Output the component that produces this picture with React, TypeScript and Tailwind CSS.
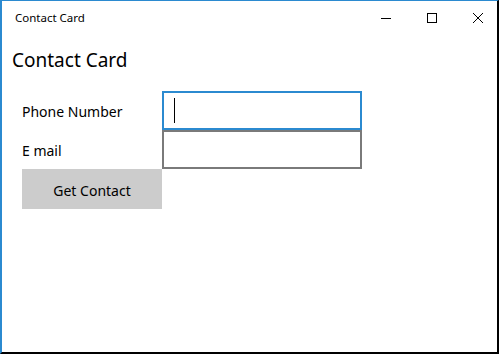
export default function App() {
  const font = { fontFamily: '"Noto Sans", "Open Sans", sans-serif' };
  return (
    <div
      className="w-[499px] h-[354px] overflow-hidden bg-white border-t border-l-2 border-t-[#2b8ad0] border-l-[#2b8ad0] border-r-2 border-b-2 border-r-black border-b-black flex flex-col text-black"
      style={font}
    >
      <div className="h-[31px] pt-[3px] flex items-center">
        <div className="pl-[13px] text-[11.5px] leading-none">Contact Card</div>
        <div className="ml-auto -mr-[4px] flex h-full">
          <div className="w-[46px] h-full flex items-center justify-center">
            <svg width="10" height="10" viewBox="0 0 10 10">
              <path d="M0 5.5H10" stroke="black" strokeWidth="1" />
            </svg>
          </div>
          <div className="w-[46px] h-full flex items-center justify-center">
            <svg width="10" height="10" viewBox="0 0 10 10">
              <rect x="0.5" y="0.5" width="9" height="9" fill="none" stroke="black" strokeWidth="1" />
            </svg>
          </div>
          <div className="w-[46px] h-full flex items-center justify-center">
            <svg width="10" height="10" viewBox="0 0 10 10">
              <path d="M0 0L10 10M10 0L0 10" stroke="black" strokeWidth="1" />
            </svg>
          </div>
        </div>
      </div>
      <div className="mt-[14px] pl-[10px] text-[19px] leading-[28px]">Contact Card</div>
      <div className="mt-[17px] ml-[20px] grid grid-cols-[140px_200px] grid-rows-[39px_39px_40px]">
        <div className="flex items-center pt-[2px] text-[14px]">Phone Number</div>
        <div className="border-2 border-[#2b8ad0] flex items-center pl-[10px]">
          <div className="w-px h-[25px] bg-black" />
        </div>
        <div className="flex items-center pt-[2px] text-[14px]">E mail</div>
        <div className="border-2 border-[#7a7a7a]" />
        <div className="bg-[#cccccc] flex items-center justify-center pt-[2px] text-[14px]">Get Contact</div>
        <div />
      </div>
    </div>
  );
}
